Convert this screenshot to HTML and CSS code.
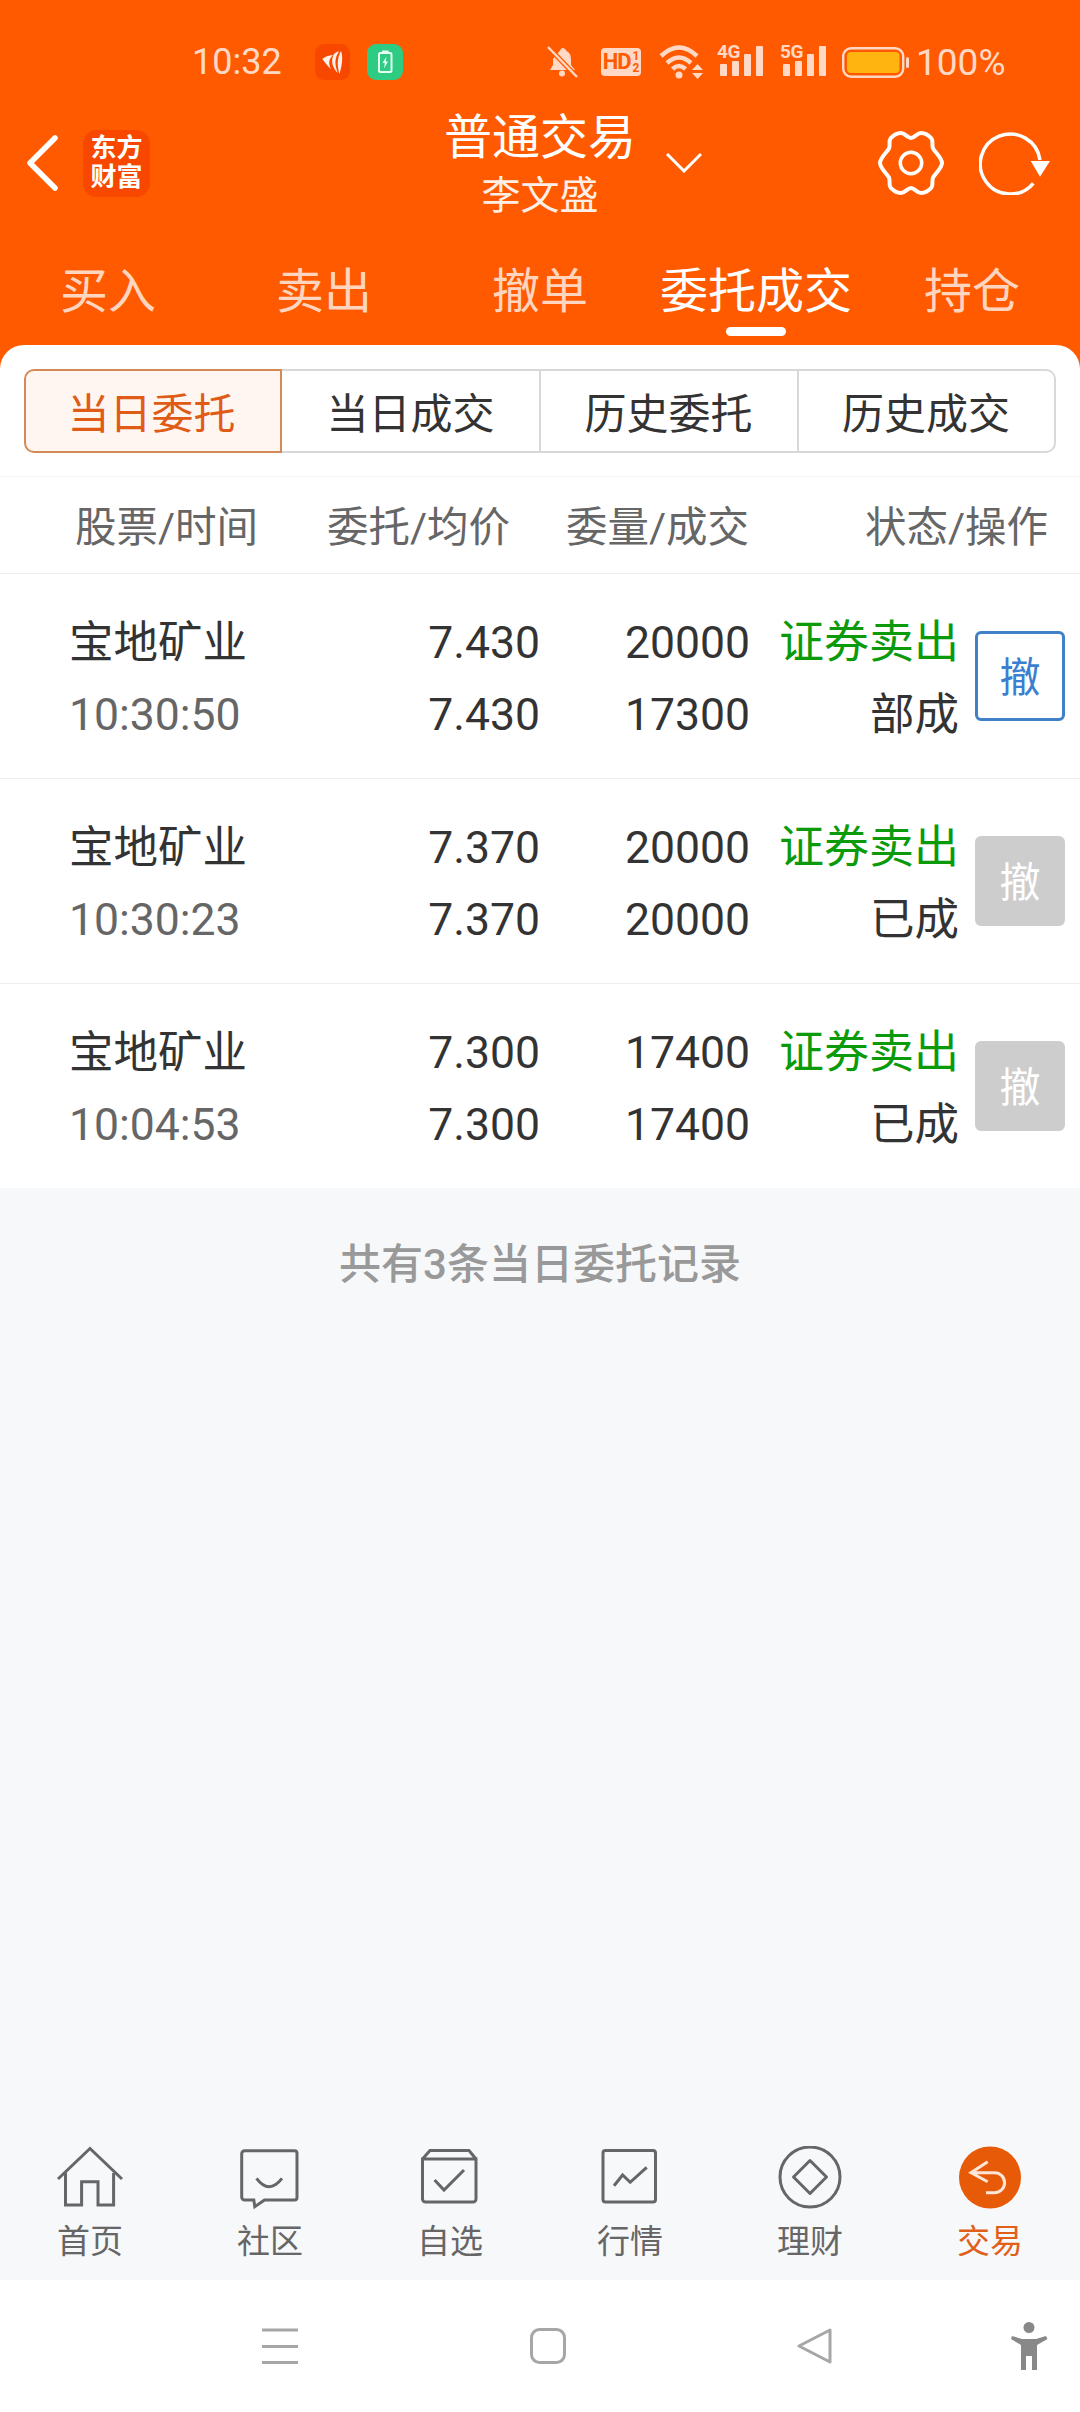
FILE: index.html
```html
<!DOCTYPE html>
<html lang="zh-CN">
<head>
    <meta charset="UTF-8">
    <meta name="viewport" content="width=device-width, initial-scale=1.0">
    <title>委托成交</title>
    <link rel="stylesheet" href="styles.css">
</head>
<body>

    <div class="header">
        <!-- status bar -->
        <div class="status">
            <span class="clock">10:32</span>
            <svg class="app-icon" width="35" height="36" viewBox="0 0 35 36">
                <rect width="35" height="36" rx="9" fill="#f84800"/>
                <path d="M7.300 15C11 12 15 11 18 11C14 15 13 19 16 25C12 22 10 18 7.300 15Z M19 10C21 8 23 7.500 24 7.500C20 13 19 20 23 29C18 25 15 17 19 10Z M26 7C28 12 27.500 20 24.500 30C22 22 22 14 26 7Z" fill="#fff1e8"/>
            </svg>
            <svg class="app-icon app-icon-2" width="36" height="36" viewBox="0 0 36 36">
                <rect width="36" height="36" rx="9" fill="#2ecb82"/>
                <rect x="12" y="9" width="12.500" height="19" rx="1.500" fill="none" stroke="#e8fff4" stroke-width="2"/>
                <rect x="15" y="6.500" width="6.500" height="2.500" fill="#e8fff4"/>
                <path d="M19.500 12.500L15.500 19H17.800L17 24.500L21 17.500H18.700Z" fill="#e8fff4"/>
            </svg>
            <svg class="bell" width="31" height="32" viewBox="0 0 31 32">
                <path d="M15 2C18 2 19 4 19.500 5C23 6.500 24 10 24 14L24 19L28 24H3L6 19V13Z" fill="#ffd9c6"/>
                <circle cx="15" cy="27.500" r="3" fill="#ffd9c6"/>
                <path d="M1 1L30 31" stroke="#ff5a00" stroke-width="5"/>
                <path d="M1 1L30 31" stroke="#ffd9c6" stroke-width="2.500"/>
            </svg>
            <span class="hd">HD<span class="hd-num"><i>1</i><i>2</i></span></span>
            <svg class="wifi" width="44" height="34" viewBox="0 0 44 34">
                <path d="M2 11Q20 -6 38 11M8 18Q20 7 32 18M13.500 24Q20 18 26.500 24" fill="none" stroke="#ffd9c6" stroke-width="4.500"/>
                <circle cx="20" cy="30" r="3.500" fill="#ffd9c6"/>
                <path d="M33 25L38.500 19L44 25ZM33 28L44 28L38.500 34Z" fill="#ffd9c6"/>
            </svg>
            <svg class="signal" width="46" height="38" viewBox="0 -6 46 38">
                <text class="signal-text" x="0" y="14">4G</text>
                <rect x="3" y="20" width="7" height="12" rx="1" />
                <rect x="15" y="17" width="7" height="15" rx="1" />
                <rect x="27" y="10" width="7" height="22" rx="1" />
                <rect x="39" y="2" width="7" height="30" rx="1" />
            </svg>
            <svg class="signal signal-2" width="46" height="38" viewBox="0 -6 46 38">
                <text class="signal-text" x="0" y="14">5G</text>
                <rect x="3" y="20" width="7" height="12" rx="1" />
                <rect x="15" y="17" width="7" height="15" rx="1" />
                <rect x="27" y="10" width="7" height="22" rx="1" />
                <rect x="39" y="2" width="7" height="30" rx="1" />
            </svg>
            <svg class="battery" width="67" height="31" viewBox="0 0 67 31">
                <rect x="1.200" y="1.200" width="60" height="28.600" rx="8" fill="none" stroke="#ffd9c6" stroke-width="2.400"/>
                <rect x="5" y="5" width="52.500" height="21" rx="4" fill="#ffb40f"/>
                <rect x="64" y="10" width="3" height="11" rx="1.500" fill="#ffd9c6"/>
            </svg>
            <span class="percent">100%</span>
        </div>

        <!-- title bar -->
        <div class="nav">
            <div class="nav-left">
                <svg class="back" width="38" height="62" viewBox="0 0 38 62">
                    <path d="M31 6L6 31L31 56" fill="none" stroke="#fff" stroke-width="5.500" stroke-linecap="round" stroke-linejoin="round"/>
                </svg>
                <div class="logo">东方<br>财富</div>
            </div>
            <div class="nav-title">
                <div class="title">普通交易</div>
                <div class="subtitle">李文盛</div>
            </div>
            <div class="nav-right">
                <svg class="chevron" width="36" height="20" viewBox="0 0 36 20">
                    <path d="M1 1L18 18L35 1" fill="none" stroke="#fff" stroke-width="3"/>
                </svg>
                <svg class="gear" width="66" height="64" viewBox="0 0 66 64">
                    <path d="M33 7C36.500 7 39 2 43 2C47 2 50.500 4 53.500 7.500C55.500 10 53.500 14 55 17.500C57 21 64 27 64 32C64 37 57 43 55 46.500C53.500 50 55.500 54 53.500 56.500C50.500 60 47 62 43 62C39 62 36.500 57 33 57C29.500 57 27 62 23 62C19 62 15.500 60 12.500 56.500C10.500 54 12.500 50 11 46.500C9 43 2 37 2 32C2 27 9 21 11 17.500C12.500 14 10.500 10 12.500 7.500C15.500 4 19 2 23 2C27 2 29.500 7 33 7Z" fill="none" stroke="#fff" stroke-width="4" stroke-linejoin="round"/>
                    <circle cx="33" cy="32" r="10.700" fill="none" stroke="#fff" stroke-width="3.500"/>
                </svg>
                <svg class="refresh" width="71" height="64" viewBox="0 0 71 64">
                    <path d="M54.300 52.300A30 30 0 1 1 61 29" fill="none" stroke="#fff" stroke-width="3.500"/>
                    <path d="M51.700 30H71L61 45.700Z" fill="#fff"/>
                </svg>
            </div>
        </div>

        <div class="tabs">
            <div class="tab">买入</div>
            <div class="tab">卖出</div>
            <div class="tab">撤单</div>
            <div class="tab tab-active">委托成交</div>
            <div class="tab">持仓</div>
        </div>
    </div>

    <div class="content">
        <div class="seg-wrap">
            <div class="seg">
                <div class="seg-item seg-active">当日委托</div>
                <div class="seg-item">当日成交</div>
                <div class="seg-item">历史委托</div>
                <div class="seg-item">历史成交</div>
            </div>
        </div>

        <div class="table-head">
            <div>股票/时间</div>
            <div class="right">委托/均价</div>
            <div class="right">委量/成交</div>
            <div class="right">状态/操作</div>
        </div>

        <div class="row">
            <div class="cell"><div>宝地矿业</div><div class="muted">10:30:50</div></div>
            <div class="cell right"><div>7.430</div><div>7.430</div></div>
            <div class="cell right"><div>20000</div><div>17300</div></div>
            <div class="cell right"><div class="green">证券卖出</div><div>部成</div></div>
            <div class="cancel">撤</div>
        </div>
        <div class="row">
            <div class="cell"><div>宝地矿业</div><div class="muted">10:30:23</div></div>
            <div class="cell right"><div>7.370</div><div>7.370</div></div>
            <div class="cell right"><div>20000</div><div>20000</div></div>
            <div class="cell right"><div class="green">证券卖出</div><div>已成</div></div>
            <div class="cancel cancel-off">撤</div>
        </div>
        <div class="row row-last">
            <div class="cell"><div>宝地矿业</div><div class="muted">10:04:53</div></div>
            <div class="cell right"><div>7.300</div><div>7.300</div></div>
            <div class="cell right"><div>17400</div><div>17400</div></div>
            <div class="cell right"><div class="green">证券卖出</div><div>已成</div></div>
            <div class="cancel cancel-off">撤</div>
        </div>
    </div>

    <div class="empty">共有3条当日委托记录</div>

    <div class="tabbar">
        <div class="bar-item">
            <svg width="72" height="64" viewBox="0 0 72 64">
                <path d="M4 33L36 2.500L68 33M11.500 27V59H27.600V35.700H44V59H59.600V27" class="line"/>
            </svg>
            <span>首页</span>
        </div>
        <div class="bar-item">
            <svg width="72" height="64" viewBox="0 0 72 64">
                <path d="M10.700 4.700H60.500A2.500 2.500 0 0 1 63 7.200V51.500A2.500 2.500 0 0 1 60.500 54H30.500L20.800 60.700L19.800 54H10.700A3 3 0 0 1 7.700 51V7.700A3 3 0 0 1 10.700 4.700Z" class="line"/>
                <path d="M22.500 32.300Q35 49 48 32.300" class="line"/>
            </svg>
            <span>社区</span>
        </div>
        <div class="bar-item">
            <svg width="72" height="64" viewBox="0 0 72 64">
                <path d="M8.500 13H62V53A3 3 0 0 1 59 56H11.500A3 3 0 0 1 8.500 53ZM8.500 13L16 4.500H55L62 13" class="line"/>
                <path d="M20.600 34L30 44L50 24" class="line"/>
            </svg>
            <span>自选</span>
        </div>
        <div class="bar-item">
            <svg width="72" height="64" viewBox="0 0 72 64">
                <rect x="9" y="4.500" width="52.500" height="51.500" rx="2.500" class="line"/>
                <path d="M20 39.700L28.600 29L36.200 36.300L52.700 21.300" class="line"/>
            </svg>
            <span>行情</span>
        </div>
        <div class="bar-item">
            <svg width="72" height="64" viewBox="0 0 72 64">
                <circle cx="36" cy="31" r="30" class="line"/>
                <path d="M36 14.500L52.500 31L36 47.500L19.500 31Z" class="line" stroke-linejoin="round"/>
            </svg>
            <span>理财</span>
        </div>
        <div class="bar-item bar-active">
            <svg width="72" height="64" viewBox="0 0 72 64">
                <circle cx="36" cy="31.500" r="31" fill="#e65a08"/>
                <path d="M33.700 15.700L17 26.700L33.700 35.700M17 26.700H40.600A10 10 0 0 1 40.600 46.700H32" fill="none" stroke="#ffe6d6" stroke-width="3"/>
            </svg>
            <span>交易</span>
        </div>
    </div>

    <div class="sysnav">
        <svg class="sys-menu" width="36" height="36" viewBox="0 0 36 36">
            <path d="M0 2H36M0 18.500H36M0 34.500H36" stroke="#a6a6a6" stroke-width="3"/>
        </svg>
        <svg class="sys-home" width="36" height="36" viewBox="0 0 36 36">
            <rect x="1.500" y="1.500" width="33" height="33" rx="8" fill="none" stroke="#a6a6a6" stroke-width="3"/>
        </svg>
        <svg class="sys-back" width="36" height="36" viewBox="0 0 36 36">
            <path d="M2 18L33 2V34Z" fill="none" stroke="#a6a6a6" stroke-width="3" stroke-linejoin="round"/>
        </svg>
        <svg class="sys-person" width="37" height="48" viewBox="0 0 37 48">
            <circle cx="18" cy="5.500" r="5.500" fill="#888"/>
            <path d="M1 14L11 17H25L35 14L36.500 17L26 23V48H21V34H15V48H10V23L0 17Z" fill="#888"/>
        </svg>
    </div>

</body>
</html>
```

FILE: styles.css
```css
* {
    box-sizing: border-box;
}

html, body {
    margin: 0;
    padding: 0;
}

body {
    width: 1080px;
    height: 2412px;
    display: flex;
    flex-direction: column;
    overflow: hidden;
    background-color: #f7f8fa;
    font-family: Roboto, "Noto Sans CJK SC", sans-serif;
    color: #333;
}

svg {
    display: block;
    flex-shrink: 0;
}

/* header */
.header {
    background-color: #ff5a00;
    height: 370px;
    margin-bottom: -25px;
}

.status {
    height: 100px;
    padding: 24px 0 0 192px;
    display: flex;
    align-items: center;
    color: #ffd9c6;
}

.clock {
    font-size: 36px;
    width: 123px;
}

.app-icon-2 {
    margin-left: 17px;
}

.bell {
    margin-left: 144px;
}

.hd {
    margin-left: 23px;
    width: 40px;
    height: 28px;
    border-radius: 4px;
    background-color: #ffd9c6;
    color: #ff5a00;
    font-size: 22px;
    font-weight: 700;
    letter-spacing: -1px;
    display: flex;
    align-items: center;
    justify-content: center;
    line-height: 1;
}

.hd-num {
    display: flex;
    flex-direction: column;
    font-size: 12px;
    line-height: 12px;
    margin-left: 2px;
    letter-spacing: 0;
}

.hd-num i {
    font-style: normal;
}

.wifi {
    margin-left: 18px;
}

.signal {
    margin-left: 14px;
    margin-bottom: 10px;
}

.signal-2 {
    margin-left: 17px;
}

.signal rect {
    fill: #ffd9c6;
}

.signal-text {
    font-family: Roboto, sans-serif;
    font-size: 19px;
    font-weight: 700;
    letter-spacing: -0.5px;
    fill: #ffd9c6;
}

.battery {
    margin-left: 16px;
}

.percent {
    margin-left: 7px;
    font-size: 37px;
}

.nav {
    height: 126px;
    display: grid;
    grid-template-columns: 1fr auto 1fr;
    align-items: center;
}

.nav-left {
    display: flex;
    align-items: center;
    padding-left: 24px;
}

.logo {
    margin-left: 21px;
    width: 67px;
    height: 67px;
    border-radius: 14px;
    background-color: #f84800;
    color: #fff;
    font-size: 26px;
    font-weight: 700;
    line-height: 29px;
    text-align: center;
    padding-top: 4px;
}

.nav-title {
    width: 192px;
    text-align: center;
    color: #fff;
}

.title {
    font-size: 48px;
    line-height: 58px;
    white-space: nowrap;
    margin-left: -2px;
    margin-right: -2px;
}

.subtitle {
    font-size: 39px;
    line-height: 50px;
    margin-top: 4px;
    margin-bottom: -4px;
    color: #ffeee5;
}

.nav-right {
    display: flex;
    align-items: center;
    padding-right: 30px;
}

.chevron {
    margin-left: 30px;
    margin-right: auto;
}

.refresh {
    margin-left: 35px;
}

.tabs {
    display: flex;
    height: 119px;
    padding-top: 3px;
}

.tab {
    flex: 1;
    position: relative;
    display: flex;
    align-items: center;
    justify-content: center;
    font-size: 48px;
    color: #ffd5bf;
    white-space: nowrap;
}

.tab-active {
    color: #fff;
}

.tab-active::after {
    content: "";
    position: absolute;
    left: 78px;
    bottom: 9px;
    width: 60px;
    height: 9px;
    border-radius: 5px;
    background-color: #fff;
}

/* list */
.content {
    background-color: #fff;
    border-radius: 24px 24px 0 0;
    position: relative;
}

.seg-wrap {
    padding: 24px 24px 23px;
    border-bottom: 1px solid #f3f3f3;
}

.seg {
    display: grid;
    grid-template-columns: repeat(4, 258px);
    height: 84px;
}

.seg-item {
    display: flex;
    align-items: center;
    justify-content: center;
    font-size: 42px;
    padding-bottom: 2px;
    border: 2px solid #d8d8d8;
    border-left: none;
}

.seg-item:nth-child(2),
.seg-item:nth-child(3) {
    margin-right: -1px;
}

.seg-item:first-child {
    border-radius: 10px 0 0 10px;
}

.seg-item:last-child {
    border-radius: 0 10px 10px 0;
}

.seg-active {
    background-color: #fff6f2;
    color: #e05c16;
    border: 2px solid #d48a56;
    padding-right: 3px;
}

.table-head {
    height: 97px;
    padding: 0 32px 2px 75px;
    display: grid;
    grid-template-columns: 225px 210px 239px 299px;
    align-items: center;
    font-size: 41.500px;
    color: #666;
    border-bottom: 1px solid #eee;
    white-space: nowrap;
}

.right {
    text-align: right;
}

.row {
    height: 205px;
    padding: 6px 0 0 69px;
    display: grid;
    grid-template-columns: 231px 240px 210px 209px 90px;
    align-items: center;
    font-size: 44.500px;
    line-height: 72px;
    border-bottom: 1px solid #eee;
    white-space: nowrap;
}

.row-last {
    height: 204px;
    padding-top: 5px;
    border-bottom: none;
}

.muted {
    color: #666;
}

.green {
    color: #0a9a0a;
    font-size: 45px;
}

.cancel {
    width: 90px;
    height: 90px;
    margin-left: 16px;
    margin-top: -6px;
    border-radius: 6px;
    border: 3px solid #3f80c6;
    color: #3a7fd0;
    font-size: 41px;
    line-height: 1;
    padding-top: 5px;
    display: flex;
    align-items: center;
    justify-content: center;
}

.cancel-off {
    background-color: #cdcdcd;
    border-color: #cdcdcd;
    color: #fff;
}

.empty {
    flex: 1;
    padding-top: 47px;
    text-align: center;
    font-size: 42px;
    line-height: 60px;
    font-weight: 500;
    color: #999;
}

/* bottom bar */
.tabbar {
    display: flex;
    height: 134px;
}

.bar-item {
    flex: 1;
    display: flex;
    flex-direction: column;
    align-items: center;
    font-size: 33px;
    line-height: 40px;
    color: #666;
}

.bar-item span {
    margin-top: 12px;
}

.bar-active {
    color: #e0601a;
}

.line {
    fill: none;
    stroke: #666;
    stroke-width: 3;
}

.sysnav {
    height: 132px;
    background-color: #fff;
    display: flex;
    align-items: center;
    padding: 0 0 0 262px;
}

.sys-home {
    margin-left: 232px;
}

.sys-back {
    margin-left: 231px;
}

.sys-person {
    margin-left: 178px;
}
```
